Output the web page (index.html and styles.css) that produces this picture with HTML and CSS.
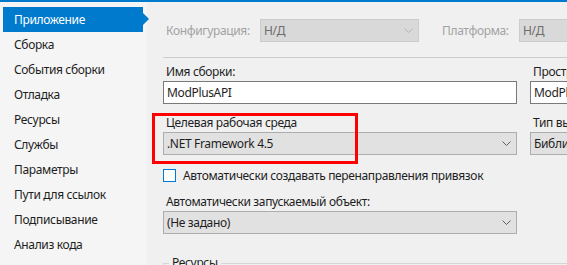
FILE: index.html
```html
<!DOCTYPE html>
<html lang="ru">
<head>
<meta charset="utf-8">
<link rel="stylesheet" href="styles.css">
</head>
<body>
<div class="topbar"></div>
<div class="main">
  <nav class="sidebar">
    <div class="nav-item active">Приложение</div>
    <div class="nav-item">Сборка</div>
    <div class="nav-item">События сборки</div>
    <div class="nav-item">Отладка</div>
    <div class="nav-item">Ресурсы</div>
    <div class="nav-item">Службы</div>
    <div class="nav-item">Параметры</div>
    <div class="nav-item">Пути для ссылок</div>
    <div class="nav-item">Подписывание</div>
    <div class="nav-item">Анализ кода</div>
  </nav>
  <section class="content">
    <div class="config-row">
      <span class="config-label">Конфигурация:</span>
      <div class="combo disabled combo-config"><span>Н/Д</span>
        <svg class="chev" width="9" height="5" viewBox="0 0 9 5"><path d="M0.5 0.5 L4.5 4.5 L8.5 0.5" fill="none" stroke="#b4b4b4" stroke-width="1"/></svg>
      </div>
      <span class="platform-label">Платформа:</span>
      <div class="combo disabled combo-platform"><span>Н/Д</span></div>
    </div>
    <div class="divider"></div>
    <div class="grid">
      <div class="col-left">
        <div class="field-label">Имя сборки:</div>
        <div class="textbox">ModPlusAPI</div>
        <div class="field-label">Целевая рабочая среда</div>
        <div class="combo"><span>.NET Framework 4.5</span>
          <svg class="chev" width="9" height="5" viewBox="0 0 9 5"><path d="M0.5 0.5 L4.5 4.5 L8.5 0.5" fill="none" stroke="#606060" stroke-width="1"/></svg>
        </div>
      </div>
      <div class="col-right">
        <div class="field-label">Пространство имен по умолчанию:</div>
        <div class="textbox">ModPlusAPI</div>
        <div class="field-label">Тип выходных данных:</div>
        <div class="combo"><span>Библиотека классов</span></div>
      </div>
    </div>
    <label class="check-row"><span class="checkbox"></span><span>Автоматически создавать перенаправления привязок</span></label>
    <div class="field-label startup-label">Автоматически запускаемый объект:</div>
    <div class="combo startup"><span>(Не задано)</span>
      <svg class="chev" width="9" height="5" viewBox="0 0 9 5"><path d="M0.5 0.5 L4.5 4.5 L8.5 0.5" fill="none" stroke="#606060" stroke-width="1"/></svg>
    </div>
    <fieldset class="group"><legend>Ресурсы</legend></fieldset>
    <div class="highlight"></div>
  </section>
</div>
</body>
</html>
```

FILE: styles.css
```css
html, body {
  margin: 0;
  padding: 0;
  width: 567px;
  height: 265px;
  overflow: hidden;
}
body {
  font-family: "Noto Sans", "Segoe UI", sans-serif;
  font-size: 12px;
  letter-spacing: -0.35px;
  color: #1e1e1e;
  background: #f0f0f0;
}
.topbar {
  height: 2px;
  background: #007acc;
}
.main {
  display: flex;
  height: 263px;
}
.sidebar {
  width: 147px;
  flex: none;
  background: #f5f5f5;
  padding-top: 5px;
  box-sizing: border-box;
}
.nav-item {
  height: 25px;
  line-height: 25px;
  margin-left: 3px;
  width: 140px;
  box-sizing: border-box;
  position: relative;
  white-space: nowrap;
  padding-left: 11px;
}
.nav-item.active {
  background: #007acc;
  color: #ffffff;
}
.nav-item.active::after {
  content: "";
  position: absolute;
  right: -6px;
  top: 6px;
  border-left: 6px solid #007acc;
  border-top: 6px solid transparent;
  border-bottom: 6px solid transparent;
}
.content {
  flex: 1;
  position: relative;
  padding: 17px 0 0 16px;
  min-width: 0;
}
.config-row {
  display: flex;
  align-items: center;
  height: 23px;
}
.config-label {
  width: 97px;
  padding-left: 3px;
  box-sizing: border-box;
  color: #a2a2a2;
  flex: none;
}
.platform-label {
  color: #a2a2a2;
  margin-left: 23px;
  width: 77px;
  flex: none;
}
.combo {
  position: relative;
  height: 23px;
  line-height: 21px;
  box-sizing: border-box;
  border: 1px solid #adadad;
  background: #e1e1e1;
  padding-left: 3px;
  white-space: nowrap;
  overflow: hidden;
}
.combo.disabled {
  background: #d9d9d9;
  border-color: #cccccc;
  color: #6d6d6d;
}
.combo-config {
  width: 159px;
  flex: none;
}
.combo-platform {
  flex: 1;
  margin-right: -10px;
  border-right: none;
}
.chev {
  position: absolute;
  right: 5px;
  top: 8px;
}
.divider {
  margin-top: 15px;
  height: 1px;
  background: #cccccc;
}
.grid {
  display: grid;
  grid-template-columns: 354px 60px;
  column-gap: 13px;
}
.col-left, .col-right {
  display: flex;
  flex-direction: column;
  min-width: 0;
}
.field-label {
  height: 16px;
  line-height: 16px;
  padding-left: 3px;
  white-space: nowrap;
  overflow: hidden;
  margin-top: 6px;
  margin-bottom: 1px;
}
.col-left .field-label + .textbox + .field-label,
.col-right .field-label + .textbox + .field-label {
  margin-top: 11px;
}
.textbox {
  height: 23px;
  line-height: 21px;
  box-sizing: border-box;
  border: 1px solid #7a7a7a;
  background: #ffffff;
  padding-left: 3px;
  white-space: nowrap;
  overflow: hidden;
}
.col-right .textbox, .col-right .combo {
  border-right: none;
}
.check-row {
  display: flex;
  align-items: center;
  gap: 7px;
  margin-top: 14px;
  height: 13px;
}
.checkbox {
  width: 13px;
  height: 13px;
  box-sizing: border-box;
  border: 1px solid #0078d7;
  background: #ffffff;
  flex: none;
}
.startup-label {
  margin-top: 12px;
}
.startup {
  width: 354px;
}
.group {
  margin: 22px 0 0 0;
  padding: 0;
  border: none;
  border-top: 1px solid #d5d5d5;
  border-left: 1px solid #d5d5d5;
  height: 20px;
}
.group legend {
  margin-left: 5px;
  padding: 0 3px;
  line-height: 14px;
}
.highlight {
  position: absolute;
  left: 5px;
  top: 111px;
  width: 206px;
  height: 51px;
  box-sizing: border-box;
  border: 3px solid #ff0000;
  pointer-events: none;
}
```
